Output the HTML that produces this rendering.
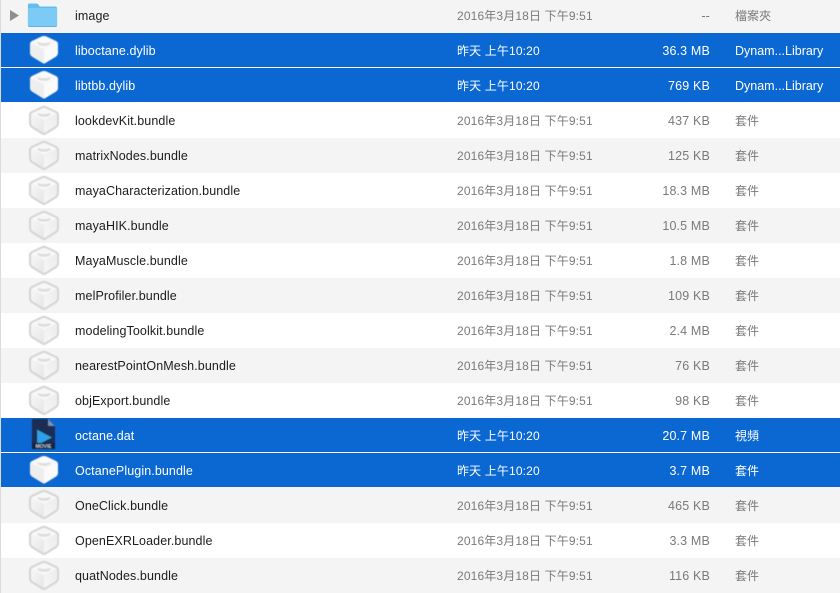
<!DOCTYPE html>
<html><head><meta charset="utf-8"><style>
html,body{margin:0;padding:0;background:#fff}
#w{position:relative;width:840px;height:593px;overflow:hidden;font-family:"Liberation Sans","Noto Sans CJK TC",sans-serif;font-size:12px;color:#1c1c1c;filter:blur(.25px)}
.r{position:absolute;left:1px;width:839px}
.g{background:#f4f4f4}.s{background:#0b68d2;color:#fff}
.n,.d,.z,.k{position:absolute;top:50%;transform:translateY(-50%);white-space:nowrap;line-height:16px}
.s .n,.s .d,.s .z,.s .k{top:calc(50% + 1px)}
.t .n,.t .d,.t .z,.t .k{top:calc(50% - 1px)}
.n{left:74px;font-size:12.5px;letter-spacing:.1px}
.d{left:456px;color:#7a7a7a;letter-spacing:.14px}
.z{right:130px;color:#7a7a7a;font-size:12.5px;letter-spacing:.16px}
.k{left:734px;color:#7a7a7a;letter-spacing:.05px}
.k.l{font-size:12.5px;letter-spacing:0}
.s .d,.s .z,.s .k{color:#fff}
svg.i{position:absolute;left:27px;top:50%;margin-top:-18px;width:32px;height:34px;filter:blur(.6px)}
#e{position:absolute;left:0;top:0;width:1px;height:593px;background:#dcdcdc}
</style></head><body><div id="w">
<svg width="0" height="0" style="position:absolute"><defs>
<linearGradient id="lf" x1="0" y1="0" x2="1" y2="1"><stop offset="0" stop-color="#f6f6f6"/><stop offset="1" stop-color="#e6e6e6"/></linearGradient>
<linearGradient id="rf" x1="1" y1="0" x2="0" y2="1"><stop offset="0" stop-color="#ececec"/><stop offset="1" stop-color="#f7f7f7"/></linearGradient>
<symbol id="b" viewBox="0 0 32 34"><path d="M13.500 4.500Q16 3.300 18.500 4.500L28 9Q30 10 30 12V20Q30 22.500 28 24L17.500 30.500Q16 31.500 14.500 30.500L4 24Q2 22.500 2 20V12Q2 10 4 9Z" fill="#f3f3f3" stroke="#d4d4d4" stroke-width="2"/><path d="M3.500 11 16 17V30L4.500 23Q3.500 22 3.500 20.500Z" fill="url(#lf)"/><path d="M28.500 11 16 17V30L27.500 23Q28.500 22 28.500 20.500Z" fill="url(#rf)"/><path d="M4 10.500 16 16.500 28 10.500 16 5Z" fill="#f9f9f9"/><ellipse cx="16" cy="11" rx="6.500" ry="2.800" fill="#dcdcdc"/><path d="M10 8C11 5.300 21 5.300 22 8V10C20 11.500 12 11.500 10 10Z" fill="#f7f7f7"/></symbol>
<symbol id="w2" viewBox="0 0 32 34"><path d="M13.500 3.500Q16 2.500 18.500 3.500L28 8Q30 9 30 11V20Q30 22 28 23.500L17.500 30Q16 31 14.500 30L4 23.500Q2 22 2 20V11Q2 9 4 8Z" fill="#f8f8f8"/><path d="M2.500 10 16 16.500V30.500L4 23.500Q2.500 22 2.500 20Z" fill="#eeeeee"/><path d="M29.500 10 16 16.500V30.500L28 23.500Q29.500 22 29.500 20Z" fill="#fbfbfb"/><ellipse cx="16" cy="10" rx="6.500" ry="2.800" fill="#dedede"/><path d="M10 7C11 4.300 21 4.300 22 7V9C20 10.500 12 10.500 10 9Z" fill="#fbfbfb"/></symbol>
</defs></svg>
<div class="r g t" style="top:0;height:33px">
<svg style="position:absolute;left:9px;top:10px" width="9" height="11"><path d="M0 0 9 5.500 0 11Z" fill="#8f8f8f"/></svg>
<svg style="position:absolute;left:26px;top:1px" width="31" height="27" viewBox="0 0 33 27" preserveAspectRatio="none"><path d="M1 4.500Q1 2.500 3 2.500H10Q11.500 2.500 12.500 4L13.500 5.500H30Q32 5.500 32 7.500V24Q32 26 30 26H3Q1 26 1 24Z" fill="#62bdf0"/><path d="M1 8.500Q1 7 3 7H30Q32 7 32 8.500V24Q32 26 30 26H3Q1 26 1 24Z" fill="#7ccbf7"/><path d="M1 25H32V24.500Q32 26 30 26H3Q1 26 1 24.500Z" fill="#5cb3e6"/></svg>
<span class="n">image</span><span class="d">2016年3月18日 下午9:51</span><span class="z">--</span><span class="k">檔案夾</span></div>
<div class="r s" style="top:33px;height:34px"><svg class="i" style="margin-top:-17px"><use href="#w2"/></svg><span class="n">liboctane.dylib</span><span class="d">昨天 上午10:20</span><span class="z">36.3 MB</span><span class="k l">Dynam...Library</span></div>
<div class="r s" style="top:68px;height:34px"><svg class="i" style="margin-top:-17px"><use href="#w2"/></svg><span class="n">libtbb.dylib</span><span class="d">昨天 上午10:20</span><span class="z">769 KB</span><span class="k l">Dynam...Library</span></div>
<div class="r" style="top:103px;height:35px"><svg class="i"><use href="#b"/></svg><span class="n">lookdevKit.bundle</span><span class="d">2016年3月18日 下午9:51</span><span class="z">437 KB</span><span class="k">套件</span></div>
<div class="r g" style="top:138px;height:35px"><svg class="i"><use href="#b"/></svg><span class="n">matrixNodes.bundle</span><span class="d">2016年3月18日 下午9:51</span><span class="z">125 KB</span><span class="k">套件</span></div>
<div class="r" style="top:173px;height:35px"><svg class="i"><use href="#b"/></svg><span class="n">mayaCharacterization.bundle</span><span class="d">2016年3月18日 下午9:51</span><span class="z">18.3 MB</span><span class="k">套件</span></div>
<div class="r g" style="top:208px;height:35px"><svg class="i"><use href="#b"/></svg><span class="n">mayaHIK.bundle</span><span class="d">2016年3月18日 下午9:51</span><span class="z">10.5 MB</span><span class="k">套件</span></div>
<div class="r" style="top:243px;height:35px"><svg class="i"><use href="#b"/></svg><span class="n">MayaMuscle.bundle</span><span class="d">2016年3月18日 下午9:51</span><span class="z">1.8 MB</span><span class="k">套件</span></div>
<div class="r g" style="top:278px;height:35px"><svg class="i"><use href="#b"/></svg><span class="n">melProfiler.bundle</span><span class="d">2016年3月18日 下午9:51</span><span class="z">109 KB</span><span class="k">套件</span></div>
<div class="r" style="top:313px;height:35px"><svg class="i"><use href="#b"/></svg><span class="n">modelingToolkit.bundle</span><span class="d">2016年3月18日 下午9:51</span><span class="z">2.4 MB</span><span class="k">套件</span></div>
<div class="r g" style="top:348px;height:35px"><svg class="i"><use href="#b"/></svg><span class="n">nearestPointOnMesh.bundle</span><span class="d">2016年3月18日 下午9:51</span><span class="z">76 KB</span><span class="k">套件</span></div>
<div class="r" style="top:383px;height:35px"><svg class="i"><use href="#b"/></svg><span class="n">objExport.bundle</span><span class="d">2016年3月18日 下午9:51</span><span class="z">98 KB</span><span class="k">套件</span></div>
<div class="r s" style="top:418px;height:34px">
<svg style="position:absolute;left:30px;top:0;filter:blur(.4px)" width="26" height="33"><path d="M2 1H17L24 8V29.500Q24 31 22.500 31H2.500Q1 31 1 29.500V2Q1 1 2 1Z" fill="#1b2d52"/><path d="M17 1V8H24Z" fill="#7d90b4"/><path d="M6 11.500 21 19.500 6 27Z" fill="#2f9fe8"/><rect x="1" y="25" width="23" height="6" fill="#14213d"/><path d="M6 11.500 21 19.500 10.500 25H6Z" fill="#2f9fe8"/><text x="12.500" y="30" font-size="5" font-weight="bold" fill="#e6e6e6" text-anchor="middle" font-family="Liberation Sans">MOVIE</text></svg>
<span class="n">octane.dat</span><span class="d">昨天 上午10:20</span><span class="z">20.7 MB</span><span class="k">視頻</span></div>
<div class="r s" style="top:453px;height:34px"><svg class="i" style="margin-top:-17px"><use href="#w2"/></svg><span class="n">OctanePlugin.bundle</span><span class="d">昨天 上午10:20</span><span class="z">3.7 MB</span><span class="k">套件</span></div>
<div class="r g" style="top:487px;height:36px"><svg class="i"><use href="#b"/></svg><span class="n" style="margin-top:.5px">OneClick.bundle</span><span class="d" style="margin-top:.5px">2016年3月18日 下午9:51</span><span class="z" style="margin-top:.5px">465 KB</span><span class="k" style="margin-top:.5px">套件</span></div>
<div class="r" style="top:523px;height:35px"><svg class="i"><use href="#b"/></svg><span class="n">OpenEXRLoader.bundle</span><span class="d">2016年3月18日 下午9:51</span><span class="z">3.3 MB</span><span class="k">套件</span></div>
<div class="r g" style="top:558px;height:35px"><svg class="i"><use href="#b"/></svg><span class="n">quatNodes.bundle</span><span class="d">2016年3月18日 下午9:51</span><span class="z">116 KB</span><span class="k">套件</span></div>
<div id="e"></div>
</div></body></html>
